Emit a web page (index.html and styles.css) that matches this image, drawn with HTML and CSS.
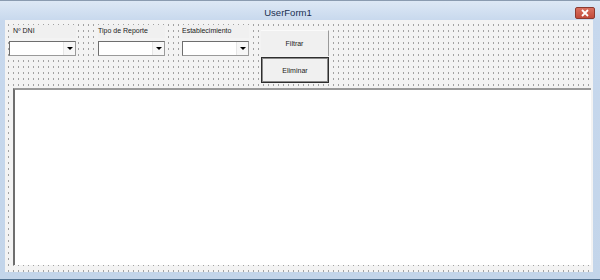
FILE: index.html
```html
<!DOCTYPE html>
<html lang="es">
<head>
    <meta charset="UTF-8">
    <meta name="viewport" content="width=device-width, initial-scale=1.0">
    <title>UserForm1</title>
    <link rel="stylesheet" href="styles.css">
</head>
<body>
    <div class="window">
        <div class="titlebar">
            <span></span>
            <div class="title">UserForm1</div>
            <div class="close">
                <svg width="10" height="8" viewBox="0 0 10 8">
                    <path d="M2 1 L8 7 M8 1 L2 7" stroke="#fff" stroke-width="1.8"/>
                </svg>
            </div>
        </div>

        <div class="client">
            <div class="controls">
                <div class="field field-dni">
                    <div class="label">Nº DNI</div>
                    <div class="combo"><span class="drop"></span></div>
                </div>
                <div class="field field-tipo">
                    <div class="label">Tipo de Reporte</div>
                    <div class="combo"><span class="drop"></span></div>
                </div>
                <div class="field field-est">
                    <div class="label">Establecimiento</div>
                    <div class="combo"><span class="drop"></span></div>
                </div>
                <div class="buttons">
                    <div class="btn">Filtrar</div>
                    <div class="btn btn-default">Eliminar</div>
                </div>
            </div>
            <div class="listbox"></div>
        </div>
    </div>
</body>
</html>
```

FILE: styles.css
```css
body {
    margin: 0;
    font-family: "Liberation Sans", Arial, sans-serif;
    background: #fff;
}
.window {
    width: 600px;
    height: 280px;
    box-sizing: border-box;
    display: flex;
    flex-direction: column;
    background: linear-gradient(#dde8f5, #c7d8ed 20px, #c3d5ea);
    border-top: 1px solid #8a9bb0;
    border-bottom: 1px solid #50708f;
}
.titlebar {
    height: 19px;
    display: grid;
    grid-template-columns: 1fr auto 1fr;
    align-items: center;
}
.title {
    font-size: 9.5px;
    color: #1a2f50;
    padding-top: 4px;
    margin-right: 24px;
}
.close {
    justify-self: end;
    margin: 5px 5px 0 0;
    width: 20px;
    height: 12px;
    box-sizing: border-box;
    background: linear-gradient(#d9705f, #c24a3b);
    border: 1px solid #8c3a30;
    border-radius: 2px;
    display: flex;
    justify-content: center;
    align-items: center;
}
.client {
    flex: 1;
    margin: 0 7px 7px 5px;
    display: flex;
    flex-direction: column;
    background-color: #f3f3f3;
    background-image: radial-gradient(circle, #a2a2a2 0.6px, transparent 1px);
    background-size: 5px 6px;
    background-position: 1px 2px;
}
.controls {
    height: 68px;
    box-sizing: border-box;
    display: flex;
    align-items: flex-start;
    padding: 5px 0 0 4px;
}
.field {
    width: 67px;
    display: flex;
    flex-direction: column;
}
.field-tipo {
    margin-left: 22px;
}
.field-est {
    margin-left: 17px;
}
.label {
    font-size: 7px;
    line-height: 11px;
    height: 13px;
    color: #222;
    background: #f0f0f0;
}
.field-dni .label {
    padding-left: 4px;
}
.combo {
    margin-top: 3px;
    height: 15px;
    box-sizing: border-box;
    background: #fff;
    border: 1px solid #9a9a9a;
    border-top-color: #6e6e6e;
    border-left-color: #6e6e6e;
    display: flex;
    justify-content: flex-end;
}
.drop {
    width: 11px;
    background: #f7f7f7;
    border-left: 1px solid #e6e6e6;
    display: flex;
    justify-content: center;
    align-items: center;
}
.drop::after {
    content: "";
    border-left: 3px solid transparent;
    border-right: 3px solid transparent;
    border-top: 3px solid #000;
}
.buttons {
    margin: 5px 0 0 12px;
    display: flex;
    flex-direction: column;
    gap: 1px;
}
.btn {
    width: 68px;
    height: 26px;
    box-sizing: border-box;
    display: flex;
    justify-content: center;
    align-items: center;
    font-size: 7px;
    color: #222;
    background: #f0f0f0;
    border-right: 1px solid #9a9a9a;
    border-top: 1px solid #fafafa;
}
.btn-default {
    border: 1px solid #2e2e2e;
    box-shadow: inset 0 0 0 1px #8a8a8a;
}
.listbox {
    flex: 1;
    margin: 0 2px 7px 8px;
    background: #fff;
    border-top: 2px solid #9a9a9a;
    border-left: 2px solid #6e6e6e;
}
```
